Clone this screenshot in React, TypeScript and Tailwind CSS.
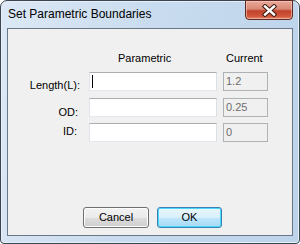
import React from "react";

export default function App() {
  const font = { fontFamily: '"Liberation Sans", Arial, sans-serif' };
  return (
    <div className="w-[300px] h-[244px] bg-white overflow-hidden">
      <div
        className="relative w-[300px] h-[244px] flex flex-col border border-[#3b4652] rounded-t-[7px] rounded-b-[4px] bg-[linear-gradient(100deg,#dce8f5_0%,#c9dcef_45%,#bcd3ea_100%)] px-[6px] pb-[7px] shadow-[inset_0_0_0_1px_#e6eff8]"
        style={font}
      >
        {/* Title bar */}
        <div className="h-[27px] flex items-start pl-[1px] pt-[6px]">
          <span className="text-[12px] leading-[15px] text-black">Set Parametric Boundaries</span>
        </div>
        {/* Close button */}
        <div className="absolute left-[244px] top-[-1px] w-[48px] h-[20px] rounded-b-[4px] border border-[#5e2a23] bg-[linear-gradient(180deg,#e9a99b_0%,#d98873_45%,#c2412a_55%,#d0573c_85%,#e5896a_100%)] shadow-[inset_0_0_0_1px_rgba(255,210,200,0.55)] flex items-center justify-center">
          <svg width="15" height="13" viewBox="0 0 15 13">
            <path
              d="M3 2.5 L12 10.5 M12 2.5 L3 10.5"
              fill="none"
              stroke="#3d1810"
              strokeWidth="4.4"
              strokeLinecap="square"
            />
            <path
              d="M3 2.5 L12 10.5 M12 2.5 L3 10.5"
              fill="none"
              stroke="#ffffff"
              strokeWidth="2.4"
              strokeLinecap="square"
            />
          </svg>
        </div>
        {/* Client area */}
        <div className="flex-1 border border-[#6b7786] bg-[#f0f0f0] flex flex-col text-[11px] leading-[13px] text-black">
          {/* Header */}
          <div className="mt-[23px] h-[13px] flex">
            <span className="ml-[110px] w-[108px]">Parametric</span>
            <span>Current</span>
          </div>
          {/* Row 1 */}
          <div className="mt-[7px] flex h-[19px]">
            <div className="w-[72px] text-right pt-[7px]">Length(L):</div>
            <div className="ml-[9px] w-[128px] h-[19px] bg-white border border-[#abadb3] border-l-[#e2e3ea] border-r-[#dbdfe6] border-b-[#e3e9ef] flex items-center pl-[2px]">
              <span className="w-[1px] h-[13px] bg-black"></span>
            </div>
            <div className="ml-[6px] w-[45px] h-[19px] bg-[#f0f0f0] border border-[#adb2b5] flex items-center pl-[2px] text-[#6d6d6d]">
              1.2
            </div>
          </div>
          {/* Row 2 */}
          <div className="mt-[7px] flex h-[19px]">
            <div className="w-[72px] text-right pr-[2px] pt-[8px]">OD:</div>
            <div className="ml-[9px] w-[128px] h-[19px] bg-white border border-[#abadb3] border-l-[#e2e3ea] border-r-[#dbdfe6] border-b-[#e3e9ef]"></div>
            <div className="ml-[6px] w-[45px] h-[19px] bg-[#f0f0f0] border border-[#adb2b5] flex items-center pl-[2px] text-[#6d6d6d]">
              0.25
            </div>
          </div>
          {/* Row 3 */}
          <div className="mt-[6px] flex h-[19px]">
            <div className="w-[72px] text-right pr-[3px] pt-[2px]">ID:</div>
            <div className="ml-[9px] w-[128px] h-[19px] bg-white border border-[#abadb3] border-l-[#e2e3ea] border-r-[#dbdfe6] border-b-[#e3e9ef]"></div>
            <div className="ml-[6px] w-[45px] h-[19px] bg-[#f0f0f0] border border-[#adb2b5] flex items-center pl-[2px] text-[#6d6d6d]">
              0
            </div>
          </div>
          {/* Buttons */}
          <div className="mt-[65px] flex ml-[75px] gap-[8px]">
            <div className="w-[66px] h-[21px] rounded-[3px] border border-[#707070] bg-[linear-gradient(180deg,#f2f2f2_0%,#ebebeb_50%,#dddddd_51%,#cfcfcf_100%)] shadow-[inset_0_0_0_1px_#fcfcfc] flex items-center justify-center">
              Cancel
            </div>
            <div className="w-[65px] h-[21px] rounded-[3px] border border-[#3c7fb1] bg-[linear-gradient(180deg,#eaf6fd_0%,#d9f0fc_50%,#bee6fd_51%,#a7d9f5_100%)] shadow-[inset_0_0_0_1px_#48d8fb] flex items-center justify-center">
              OK
            </div>
          </div>
        </div>
      </div>
    </div>
  );
}
